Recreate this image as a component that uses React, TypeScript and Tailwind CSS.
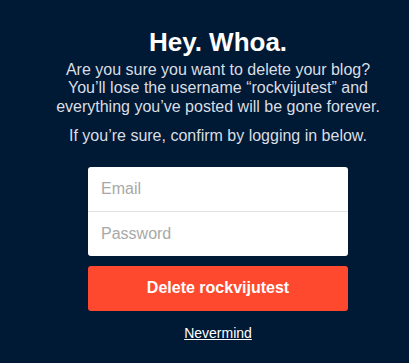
export default function App() {
  return (
    <main
      className="flex min-h-[363px] flex-col items-center bg-[#001935] pl-[27px] pt-[27px] text-white"
      style={{ fontFamily: '"Liberation Sans", Arial, sans-serif' }}
    >
      <h1 className="text-[26px] font-bold leading-[30px]">Hey. Whoa.</h1>
      <p className="mt-[4px] text-center text-[16px] leading-[18.4px] text-[#dadee3]">
        Are you sure you want to delete your blog?
        <br />
        You’ll lose the username “rockvijutest” and
        <br />
        everything you’ve posted will be gone forever.
      </p>
      <p className="mt-[11px] text-center text-[16px] leading-[18.4px] text-[#dadee3]">
        If you’re sure, confirm by logging in below.
      </p>

      <form className="mt-[21px] flex w-[260px] flex-col" onSubmit={(e) => e.preventDefault()}>
        <div className="overflow-hidden rounded-[3px] bg-white">
          <input
            type="email"
            placeholder="Email"
            className="block h-[44px] w-full px-[13px] text-[16px] text-gray-800 outline-none placeholder:text-[#a8a8a8]"
          />
          <div className="h-px bg-[#e2e2e2]" />
          <input
            type="password"
            placeholder="Password"
            className="block h-[44px] w-full px-[13px] text-[16px] text-gray-800 outline-none placeholder:text-[#a8a8a8]"
          />
        </div>
        <button
          type="submit"
          className="mt-[10px] h-[45px] rounded-[3px] bg-[#ff492f] text-[16px] font-bold text-white"
        >
          Delete rockvijutest
        </button>
      </form>

      <a href="#" className="mt-[14px] text-[14px] leading-[16px] text-white underline">
        Nevermind
      </a>
    </main>
  );
}
